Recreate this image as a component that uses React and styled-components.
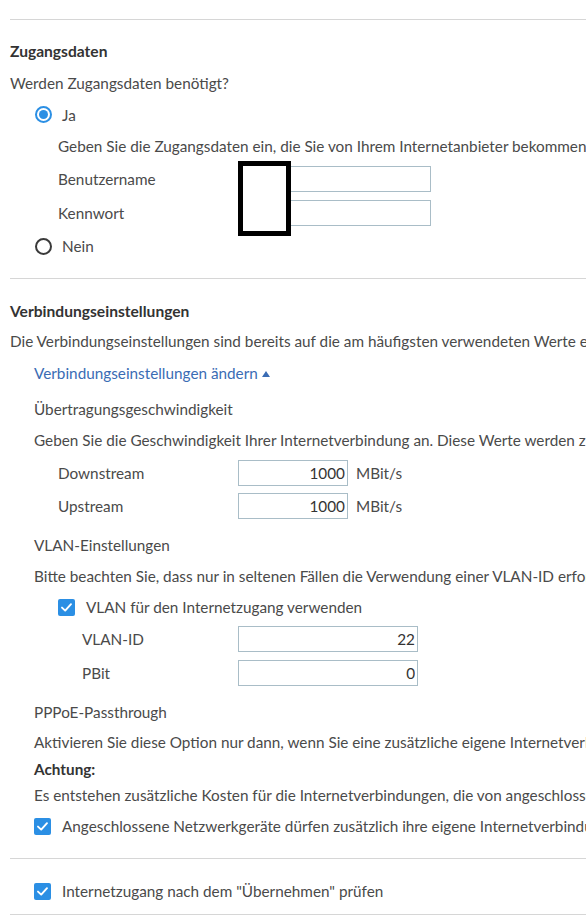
import React from "react";
import styled, { createGlobalStyle } from "styled-components";

const GlobalStyle = createGlobalStyle`
    html, body {
        margin: 0;
        padding: 0;
        background: #ffffff;
    }
    body {
        font-family: Lato, "Open Sans", sans-serif;
        font-size: 15.3px;
        color: #4a4a4a;
        overflow: hidden;
    }
`;

const Page = styled.div`
    width: 100vw;
    overflow: hidden;
    padding: 19px 0 0 10px;
    box-sizing: border-box;
`;

const Divider = styled.div`
    height: 1px;
    background: #d6d6d6;
    margin-top: ${(p) => p.$mt || 0}px;
`;

const SectionTitle = styled.div`
    font-weight: 700;
    font-size: 15.6px;
    color: #333333;
    line-height: 32px;
    margin-top: ${(p) => p.$mt || 0}px;
    white-space: nowrap;
`;

const Text = styled.div`
    line-height: ${(p) => p.$h || 30}px;
    padding-left: ${(p) => p.$indent || 0}px;
    margin-top: ${(p) => p.$mt || 0}px;
    font-weight: ${(p) => (p.$bold ? 700 : 400)};
    color: ${(p) => (p.$bold ? "#333333" : "#4a4a4a")};
    white-space: nowrap;
`;

const ToggleLink = styled.a`
    display: block;
    line-height: 34px;
    padding-left: 24px;
    color: #3a6cb4;
    text-decoration: none;
    white-space: nowrap;

    &::after {
        content: "";
        display: inline-block;
        margin-left: 4px;
        vertical-align: 2px;
        border-left: 4.5px solid transparent;
        border-right: 4.5px solid transparent;
        border-bottom: 6px solid #3a6cb4;
    }
`;

const OptionRow = styled.label`
    display: flex;
    align-items: center;
    gap: ${(p) => p.$gap || 10}px;
    height: ${(p) => p.$h || 32}px;
    padding-left: ${(p) => p.$indent || 0}px;
    margin-top: ${(p) => p.$mt || 0}px;
    white-space: nowrap;
`;

const RadioMark = styled.span`
    width: 17px;
    height: 17px;
    box-sizing: border-box;
    border-radius: 50%;
    border: 2px solid ${(p) => (p.$checked ? "#2b8fe4" : "#3a3a3a")};
    display: flex;
    align-items: center;
    justify-content: center;
    flex: none;

    &::after {
        content: "";
        width: 9px;
        height: 9px;
        border-radius: 50%;
        background: ${(p) => (p.$checked ? "#2b8fe4" : "transparent")};
    }
`;

const CheckBox = styled.span`
    width: 17px;
    height: 17px;
    border-radius: 2px;
    background: #2b8fe4;
    display: flex;
    align-items: center;
    justify-content: center;
    flex: none;
`;

const FieldGroup = styled.div`
    position: relative;
`;

const FieldRow = styled.div`
    display: grid;
    grid-template-columns: 228px max-content max-content;
    justify-content: start;
    align-items: center;
    height: ${(p) => p.$h || 34}px;
    white-space: nowrap;
`;

const FieldLabel = styled.span`
    padding-left: ${(p) => p.$indent || 0}px;
`;

const Input = styled.input`
    width: ${(p) => p.$w}px;
    height: 26px;
    box-sizing: border-box;
    border: 1px solid #a9bdc7;
    border-radius: 0;
    padding: 0 2px 0 4px;
    font-family: inherit;
    font-size: 15.3px;
    color: #333333;
    text-align: right;
    outline: none;
    background: #ffffff;
`;

const Unit = styled.span`
    margin-left: 8px;
`;

// blacked-out part of the credentials fields
const Redaction = styled.div`
    position: absolute;
    left: 228px;
    top: -1px;
    width: 53px;
    height: 75px;
    box-sizing: border-box;
    border: 5px solid #000000;
    background: #ffffff;
`;

const Check = () => (
    <CheckBox>
        <svg width="13" height="13" viewBox="0 0 13 13">
            <path d="M2 6.6 L5.2 9.6 L11 3.2" fill="none" stroke="#ffffff" strokeWidth="1.9" strokeLinecap="round" strokeLinejoin="round" />
        </svg>
    </CheckBox>
);

const App = () => {
    return (
        <>
            <GlobalStyle />
            <Page>
                <Divider />

                <SectionTitle $mt={15}>Zugangsdaten</SectionTitle>
                <Text $h={32}>Werden Zugangsdaten benötigt?</Text>
                <OptionRow $indent={25} $h={31}>
                    <RadioMark $checked />
                    Ja
                </OptionRow>
                <Text $indent={48} $h={32}>
                    Geben Sie die Zugangsdaten ein, die Sie von Ihrem Internetanbieter bekommen
                </Text>
                <FieldGroup>
                    <FieldRow>
                        <FieldLabel $indent={48}>Benutzername</FieldLabel>
                        <Input $w={193} type="text" />
                    </FieldRow>
                    <FieldRow>
                        <FieldLabel $indent={48}>Kennwort</FieldLabel>
                        <Input $w={193} type="password" />
                    </FieldRow>
                    <Redaction />
                </FieldGroup>
                <OptionRow $indent={25} $h={32}>
                    <RadioMark />
                    Nein
                </OptionRow>

                <Divider $mt={16} />

                <SectionTitle $mt={16}>Verbindungseinstellungen</SectionTitle>
                <Text $h={29}>
                    Die Verbindungseinstellungen sind bereits auf die am häufigsten verwendeten Werte ei
                </Text>
                <ToggleLink href="#">Verbindungseinstellungen ändern</ToggleLink>

                <Text $indent={24} $mt={4}>Übertragungsgeschwindigkeit</Text>
                <Text $indent={24} $h={32}>
                    Geben Sie die Geschwindigkeit Ihrer Internetverbindung an. Diese Werte werden zu
                </Text>
                <FieldRow $h={33}>
                    <FieldLabel $indent={48}>Downstream</FieldLabel>
                    <Input $w={110} defaultValue="1000" />
                    <Unit>MBit/s</Unit>
                </FieldRow>
                <FieldRow>
                    <FieldLabel $indent={48}>Upstream</FieldLabel>
                    <Input $w={110} defaultValue="1000" />
                    <Unit>MBit/s</Unit>
                </FieldRow>

                <Text $indent={24} $mt={7}>VLAN-Einstellungen</Text>
                <Text $indent={24} $h={32}>
                    Bitte beachten Sie, dass nur in seltenen Fällen die Verwendung einer VLAN-ID erford
                </Text>
                <OptionRow $indent={48} $h={30} $gap={11}>
                    <Check />
                    VLAN für den Internetzugang verwenden
                </OptionRow>
                <FieldRow>
                    <FieldLabel $indent={72}>VLAN-ID</FieldLabel>
                    <Input $w={180} defaultValue="22" />
                </FieldRow>
                <FieldRow>
                    <FieldLabel $indent={72}>PBit</FieldLabel>
                    <Input $w={180} defaultValue="0" />
                </FieldRow>

                <Text $indent={24} $mt={7}>PPPoE-Passthrough</Text>
                <Text $indent={24}>
                    Aktivieren Sie diese Option nur dann, wenn Sie eine zusätzliche eigene Internetverb
                </Text>
                <Text $indent={24} $h={24} $bold>Achtung:</Text>
                <Text $indent={24} $h={28}>
                    Es entstehen zusätzliche Kosten für die Internetverbindungen, die von angeschlosse
                </Text>
                <OptionRow $indent={24} $h={34} $gap={11}>
                    <Check />
                    Angeschlossene Netzwerkgeräte dürfen zusätzlich ihre eigene Internetverbindu
                </OptionRow>

                <Divider $mt={15} />

                <OptionRow $indent={24} $h={32} $gap={11} $mt={16}>
                    <Check />
                    Internetzugang nach dem "Übernehmen" prüfen
                </OptionRow>

                <Divider $mt={7} />
            </Page>
        </>
    );
};

export default App;
